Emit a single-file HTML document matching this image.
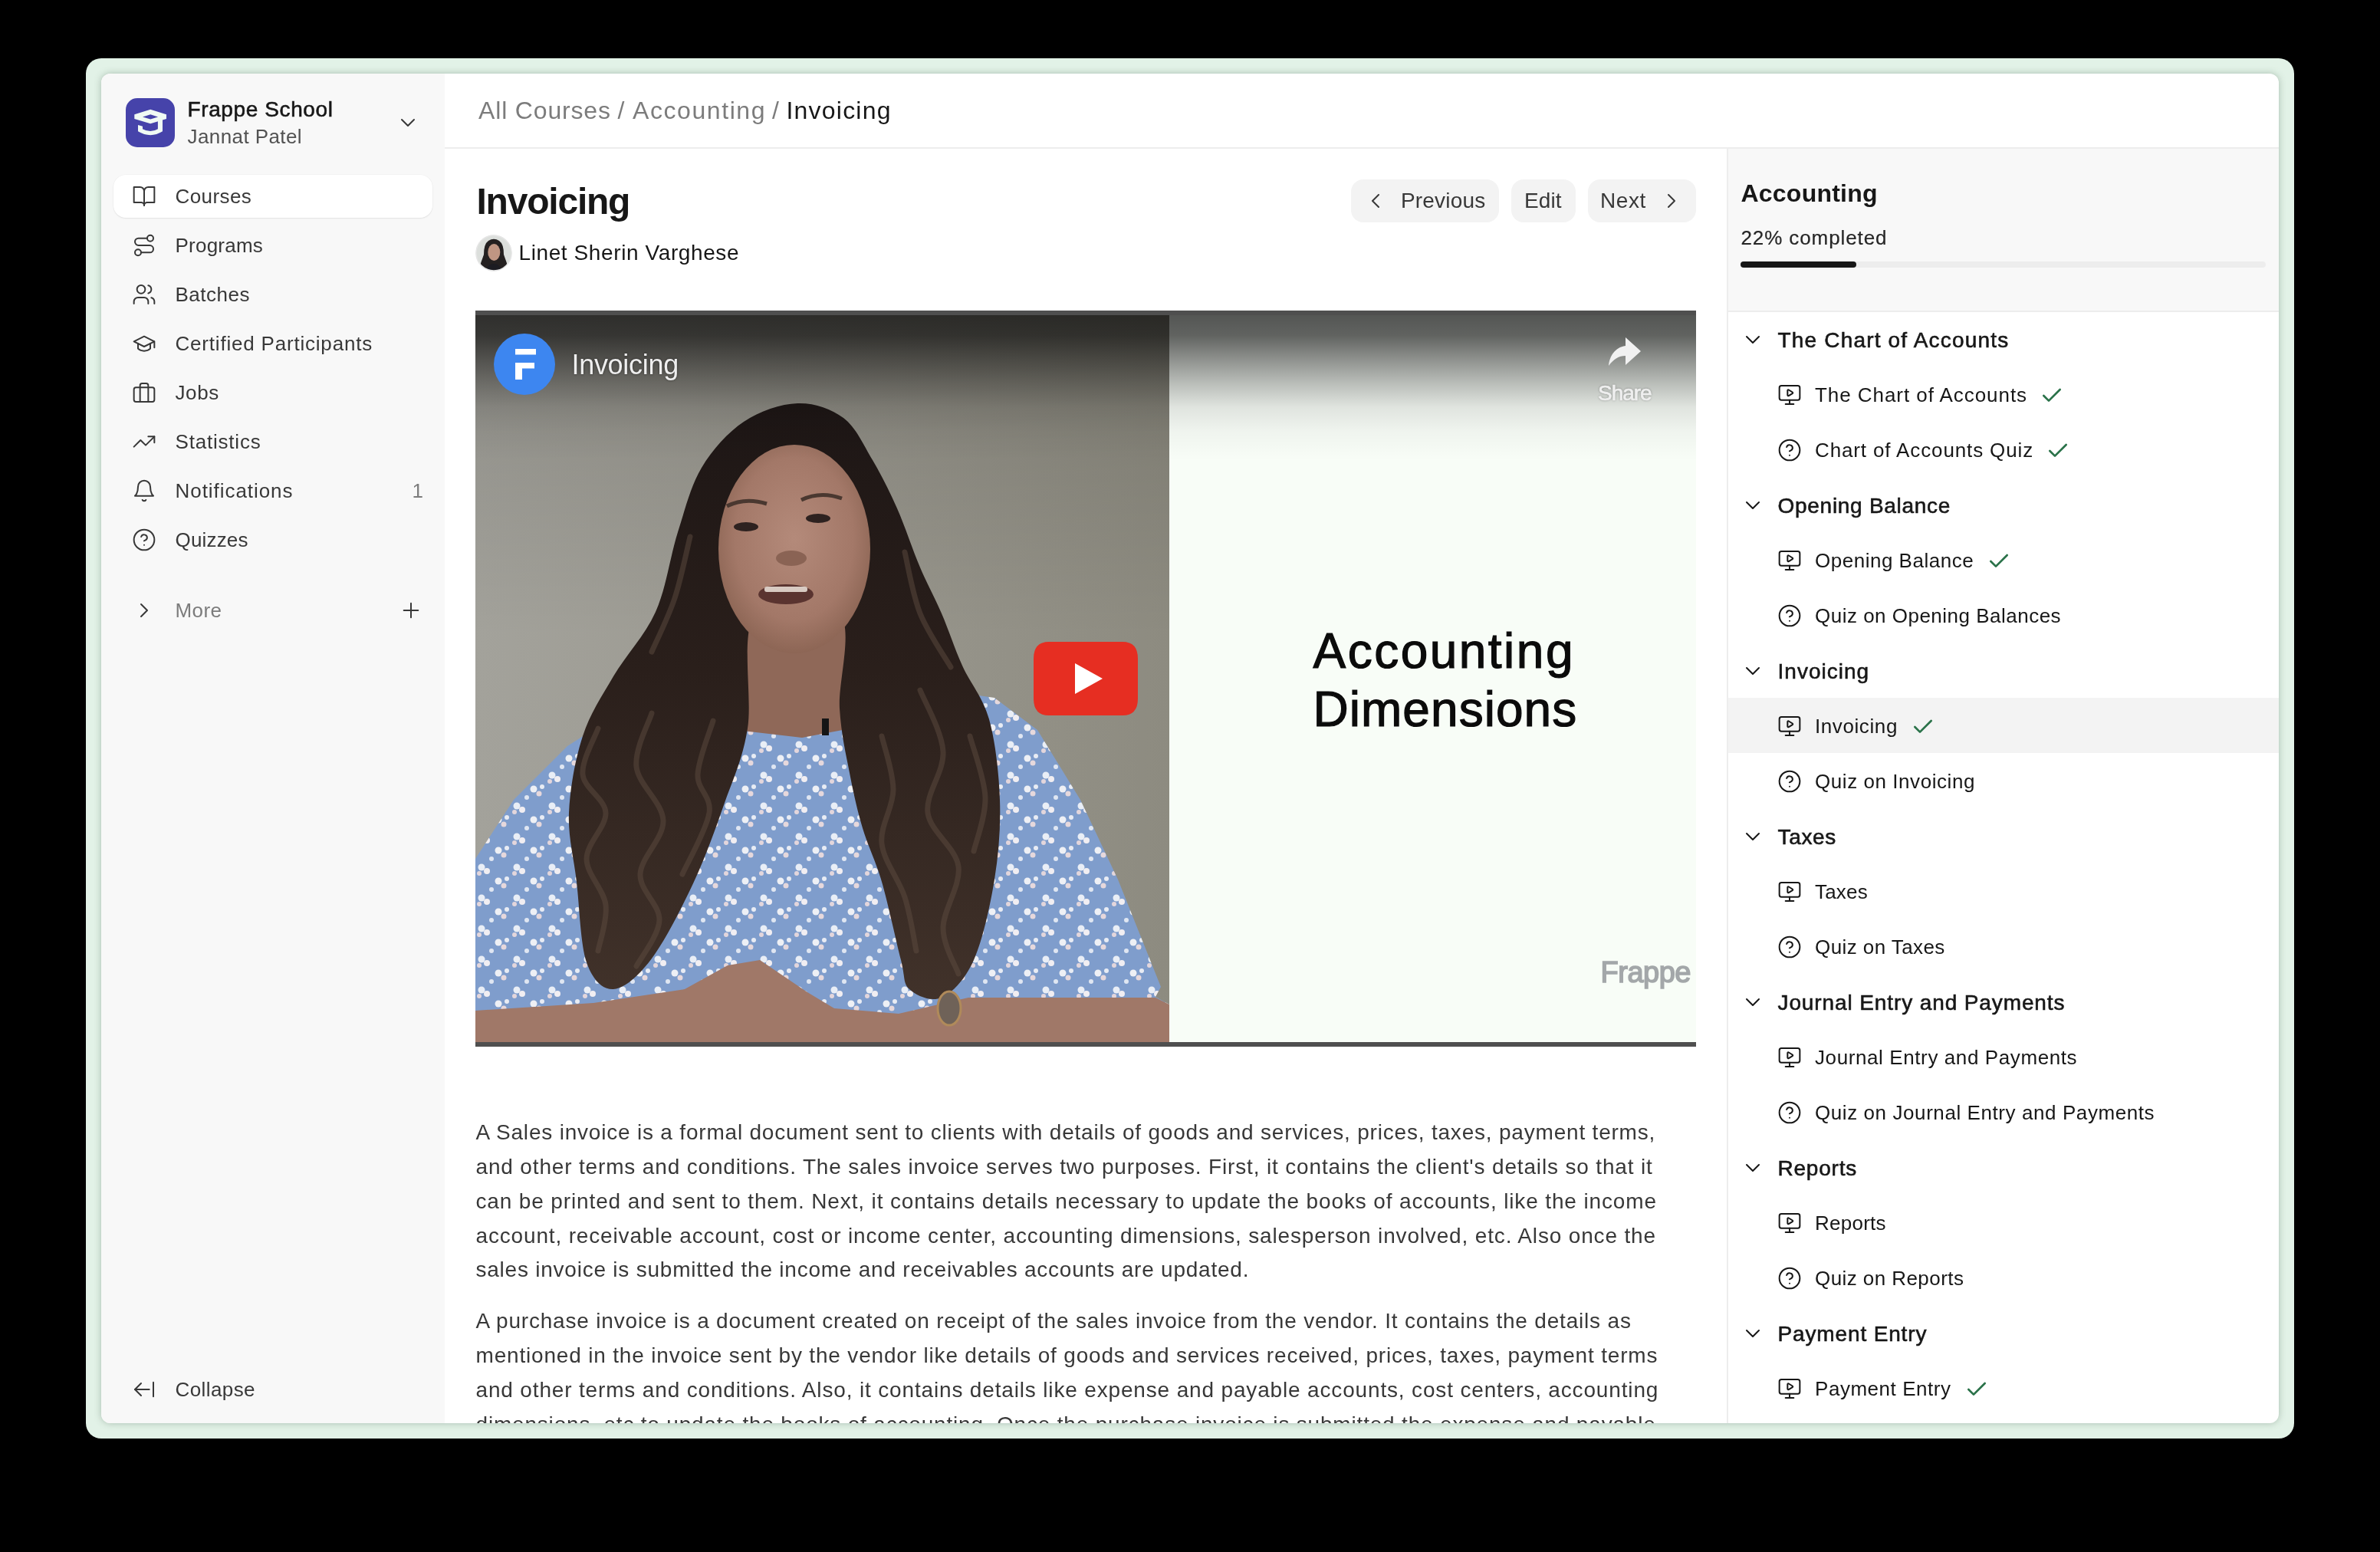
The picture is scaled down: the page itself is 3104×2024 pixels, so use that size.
<!DOCTYPE html>
<html><head><meta charset="utf-8"><title>Invoicing</title>
<style>
html,body{margin:0;padding:0;width:3104px;height:2024px;overflow:hidden;background:#000;}
body{position:relative;font-family:"Liberation Sans",sans-serif;}
.t{position:absolute;white-space:pre;}
.b{position:absolute;}
.i{position:absolute;overflow:visible;}
#frame{position:absolute;left:112px;top:76px;width:2880px;height:1800px;border-radius:20px;background:#e2f2e7;}
#win{position:absolute;left:132px;top:96px;width:2840px;height:1760px;border-radius:12px;background:#fff;box-shadow:0 0 10px rgba(60,90,70,0.35);}
#clip{position:absolute;left:132px;top:96px;width:2840px;height:1760px;overflow:hidden;border-radius:12px;}
#inner{position:absolute;left:-132px;top:-96px;width:3104px;height:2024px;will-change:transform;}
</style></head><body>
<div id="frame"></div>
<div id="win"></div>
<div id="clip"><div id="inner">
<div class="b" style="left:132px;top:96px;width:448px;height:1760px;background:#f8f8f8;"></div>
<svg class="i" style="left:160px;top:124px;width:72px;height:72px" viewBox="0 0 72 72"><rect x="4" y="4" width="64" height="64" rx="15" fill="#4643aa"/><path fill="#f0faf4" fill-rule="evenodd" d="M15.3 25.3 L36.2 18.8 L57 25.3 L57 31.1 L36.2 37.3 L15.3 31.1 Z M26 28.5 L36.2 25.3 L46.1 28.5 L36.2 31.5 Z"/><path fill="#f0faf4" d="M45.9 33 L52 31 L52 47.3 Q36.2 57 20 47.3 L20 39 L26 40.7 L26 44.2 Q36.2 50 45.9 44.2 Z"/></svg>
<div class="t" style="left:244.5px;top:129.3px;font-size:28px;line-height:28px;color:#171717;letter-spacing:0.61px;-webkit-text-stroke:0.6px #171717;">Frappe School</div>
<div class="t" style="left:244.5px;top:165.0px;font-size:26px;line-height:26px;color:#525252;letter-spacing:0.41px;">Jannat Patel</div>
<svg class="i" style="left:516px;top:144px;width:32px;height:32px;" viewBox="0 0 24 24" fill="none" stroke="#383838" stroke-width="1.5" stroke-linecap="round" stroke-linejoin="round"><path d="m6 9 6 6 6-6"/></svg>
<div class="b" style="left:148px;top:228px;width:416px;height:56px;background:#fff;border-radius:16px;box-shadow:0 1px 2px rgba(0,0,0,0.08),0 0 0 0.5px rgba(0,0,0,0.03);"></div>
<svg class="i" style="left:172px;top:240px;width:32px;height:32px;" viewBox="0 0 24 24" fill="none" stroke="#383838" stroke-width="1.5" stroke-linecap="round" stroke-linejoin="round"><path d="M2 3h6a4 4 0 0 1 4 4v14a3 3 0 0 0-3-3H2z"/><path d="M22 3h-6a4 4 0 0 0-4 4v14a3 3 0 0 1 3-3h7z"/></svg>
<div class="t" style="left:228.5px;top:243.0px;font-size:26px;line-height:26px;color:#383838;letter-spacing:0.42px;">Courses</div>
<svg class="i" style="left:172px;top:304px;width:32px;height:32px;" viewBox="0 0 24 24" fill="none" stroke="#383838" stroke-width="1.5" stroke-linecap="round" stroke-linejoin="round"><circle cx="6" cy="19" r="3"/><path d="M9 19h8.5a3.5 3.5 0 0 0 0-7h-11a3.5 3.5 0 0 1 0-7H15"/><circle cx="18" cy="5" r="3"/></svg>
<div class="t" style="left:228.5px;top:307.0px;font-size:26px;line-height:26px;color:#383838;letter-spacing:0.23px;">Programs</div>
<svg class="i" style="left:172px;top:368px;width:32px;height:32px;" viewBox="0 0 24 24" fill="none" stroke="#383838" stroke-width="1.5" stroke-linecap="round" stroke-linejoin="round"><path d="M16 21v-2a4 4 0 0 0-4-4H6a4 4 0 0 0-4 4v2"/><circle cx="9" cy="7" r="4"/><path d="M22 21v-2a4 4 0 0 0-3-3.87"/><path d="M16 3.13a4 4 0 0 1 0 7.75"/></svg>
<div class="t" style="left:228.5px;top:371.0px;font-size:26px;line-height:26px;color:#383838;letter-spacing:0.51px;">Batches</div>
<svg class="i" style="left:172px;top:432px;width:32px;height:32px;" viewBox="0 0 24 24" fill="none" stroke="#383838" stroke-width="1.5" stroke-linecap="round" stroke-linejoin="round"><path d="M22 10v6M2 10l10-5 10 5-10 5z"/><path d="M6 12v5c3 3 9 3 12 0v-5"/></svg>
<div class="t" style="left:228.5px;top:435.0px;font-size:26px;line-height:26px;color:#383838;letter-spacing:0.80px;">Certified Participants</div>
<svg class="i" style="left:172px;top:496px;width:32px;height:32px;" viewBox="0 0 24 24" fill="none" stroke="#383838" stroke-width="1.5" stroke-linecap="round" stroke-linejoin="round"><rect x="2" y="7" width="20" height="14" rx="2" ry="2"/><path d="M16 21V5a2 2 0 0 0-2-2h-4a2 2 0 0 0-2 2v16"/></svg>
<div class="t" style="left:228.5px;top:499.0px;font-size:26px;line-height:26px;color:#383838;letter-spacing:0.60px;">Jobs</div>
<svg class="i" style="left:172px;top:560px;width:32px;height:32px;" viewBox="0 0 24 24" fill="none" stroke="#383838" stroke-width="1.5" stroke-linecap="round" stroke-linejoin="round"><polyline points="22 7 13.5 15.5 8.5 10.5 2 17"/><polyline points="16 7 22 7 22 13"/></svg>
<div class="t" style="left:228.5px;top:563.0px;font-size:26px;line-height:26px;color:#383838;letter-spacing:0.80px;">Statistics</div>
<svg class="i" style="left:172px;top:624px;width:32px;height:32px;" viewBox="0 0 24 24" fill="none" stroke="#383838" stroke-width="1.5" stroke-linecap="round" stroke-linejoin="round"><path d="M6 8a6 6 0 0 1 12 0c0 7 3 9 3 9H3s3-2 3-9"/><path d="M10.3 21a1.94 1.94 0 0 0 3.4 0"/></svg>
<div class="t" style="left:228.5px;top:627.0px;font-size:26px;line-height:26px;color:#383838;letter-spacing:0.95px;">Notifications</div>
<svg class="i" style="left:172px;top:688px;width:32px;height:32px;" viewBox="0 0 24 24" fill="none" stroke="#383838" stroke-width="1.5" stroke-linecap="round" stroke-linejoin="round"><circle cx="12" cy="12" r="10"/><path d="M9.09 9a3 3 0 0 1 5.83 1c0 2-3 3-3 3"/><path d="M12 17h.01"/></svg>
<div class="t" style="left:228.5px;top:691.0px;font-size:26px;line-height:26px;color:#383838;letter-spacing:0.18px;">Quizzes</div>
<div class="t" style="left:537.5px;top:627.0px;font-size:26px;line-height:26px;color:#7c7c7c;">1</div>
<svg class="i" style="left:172px;top:780px;width:32px;height:32px;" viewBox="0 0 24 24" fill="none" stroke="#383838" stroke-width="1.5" stroke-linecap="round" stroke-linejoin="round"><path d="m9 18 6-6-6-6"/></svg>
<div class="t" style="left:228.5px;top:783.0px;font-size:26px;line-height:26px;color:#7c7c7c;letter-spacing:0.39px;">More</div>
<svg class="i" style="left:520px;top:780px;width:32px;height:32px;" viewBox="0 0 24 24" fill="none" stroke="#383838" stroke-width="1.5" stroke-linecap="round" stroke-linejoin="round"><path d="M5 12h14"/><path d="M12 5v14"/></svg>
<svg class="i" style="left:172px;top:1796px;width:32px;height:32px;" viewBox="0 0 24 24" fill="none" stroke="#383838" stroke-width="1.5" stroke-linecap="round" stroke-linejoin="round"><path d="m9 6-6 6 6 6"/><path d="M3 12h14"/><path d="M21 19V5"/></svg>
<div class="t" style="left:228.5px;top:1799.0px;font-size:26px;line-height:26px;color:#383838;letter-spacing:0.41px;">Collapse</div>
<div class="b" style="left:580px;top:192px;width:2392px;height:2px;background:#ededed;"></div>
<div class="t" style="left:624.0px;top:127.6px;font-size:32px;line-height:32px;color:#7c7c7c;letter-spacing:0.84px;">All Courses</div>
<div class="t" style="left:805.5px;top:127.6px;font-size:32px;line-height:32px;color:#7c7c7c;">/</div>
<div class="t" style="left:825.1px;top:127.6px;font-size:32px;line-height:32px;color:#7c7c7c;letter-spacing:1.56px;">Accounting</div>
<div class="t" style="left:1007.0px;top:127.6px;font-size:32px;line-height:32px;color:#7c7c7c;">/</div>
<div class="t" style="left:1025.5px;top:127.6px;font-size:32px;line-height:32px;color:#171717;letter-spacing:1.21px;">Invoicing</div>
<div class="t" style="left:621.5px;top:238.9px;font-size:48px;line-height:48px;color:#171717;letter-spacing:-1.22px;font-weight:700;">Invoicing</div>
<svg class="i" style="left:620px;top:306px;width:48px;height:48px" viewBox="0 0 48 48"><defs><clipPath id="av"><circle cx="24" cy="24" r="23"/></clipPath></defs><circle cx="24" cy="24" r="23.5" fill="#dcdfdc"/><g clip-path="url(#av)"><path d="M4 48 Q7 36 11 26 Q11 12 17 8 Q24 3.5 31 8 Q37 12 37 26 Q41 36 44 48 Z" fill="#242020"/><ellipse cx="24.3" cy="23" rx="8" ry="11" fill="#c09683"/><path d="M13 48 Q16 38 24 38 Q32 38 35 48 Z" fill="#1c1c22"/></g><circle cx="24" cy="24" r="23" fill="none" stroke="#e6e6e6" stroke-width="1.5"/></svg>
<div class="t" style="left:676.5px;top:315.8px;font-size:28px;line-height:28px;color:#171717;letter-spacing:0.60px;">Linet Sherin Varghese</div>
<div class="b" style="left:1762px;top:234px;width:193px;height:56px;background:#f3f3f3;border-radius:16px;"></div>
<div class="b" style="left:1971px;top:234px;width:84px;height:56px;background:#f3f3f3;border-radius:16px;"></div>
<div class="b" style="left:2071px;top:234px;width:141px;height:56px;background:#f3f3f3;border-radius:16px;"></div>
<svg class="i" style="left:1778px;top:246px;width:32px;height:32px;" viewBox="0 0 24 24" fill="none" stroke="#383838" stroke-width="1.5" stroke-linecap="round" stroke-linejoin="round"><path d="m15 18-6-6 6-6"/></svg>
<div class="t" style="left:1826.9px;top:248.0px;font-size:28px;line-height:28px;color:#383838;letter-spacing:0.19px;">Previous</div>
<div class="t" style="left:1988.1px;top:248.0px;font-size:28px;line-height:28px;color:#383838;letter-spacing:0.05px;">Edit</div>
<div class="t" style="left:2086.9px;top:248.0px;font-size:28px;line-height:28px;color:#383838;letter-spacing:0.61px;">Next</div>
<svg class="i" style="left:2164px;top:246px;width:32px;height:32px;" viewBox="0 0 24 24" fill="none" stroke="#383838" stroke-width="1.5" stroke-linecap="round" stroke-linejoin="round"><path d="m9 18 6-6-6-6"/></svg>
<div class="b" style="left:620px;top:405px;width:1592px;height:960px;background:#4f4f4f;overflow:hidden;">
<svg style="position:absolute;left:0;top:0;width:1592px;height:960px" viewBox="0 0 1592 960">
<defs>
<linearGradient id="wall" x1="0" y1="0" x2="1" y2="0"><stop offset="0" stop-color="#a3a29b"/><stop offset="0.5" stop-color="#9a988f"/><stop offset="1" stop-color="#8d8b80"/></linearGradient><linearGradient id="wallv" x1="0" y1="0" x2="0" y2="1"><stop offset="0" stop-color="#000" stop-opacity="0.14"/><stop offset="1" stop-color="#000" stop-opacity="0"/></linearGradient>
<linearGradient id="topfade" x1="0" y1="0" x2="0" y2="1"><stop offset="0" stop-color="#000" stop-opacity="0.66"/><stop offset="0.14" stop-color="#000" stop-opacity="0.61"/><stop offset="0.3" stop-color="#000" stop-opacity="0.43"/><stop offset="0.47" stop-color="#000" stop-opacity="0.25"/><stop offset="0.63" stop-color="#000" stop-opacity="0.10"/><stop offset="0.8" stop-color="#000" stop-opacity="0.035"/><stop offset="1" stop-color="#000" stop-opacity="0"/></linearGradient>
<radialGradient id="face" cx="0.5" cy="0.45" r="0.6"><stop offset="0" stop-color="#b48a7a"/><stop offset="0.65" stop-color="#a37868"/><stop offset="1" stop-color="#86604f"/></radialGradient>
<linearGradient id="hair" x1="0" y1="0" x2="0" y2="1"><stop offset="0" stop-color="#1d1615"/><stop offset="0.45" stop-color="#2a1f1b"/><stop offset="1" stop-color="#41322a"/></linearGradient>
<pattern id="flow" width="46" height="40" patternUnits="userSpaceOnUse">
<rect width="46" height="40" fill="#7f9dcc"/>
<circle cx="8" cy="6" r="4.5" fill="#e9eef6"/><circle cx="15" cy="11" r="4" fill="#f1eef2"/><circle cx="5" cy="14" r="3" fill="#e3d6dc"/><circle cx="30" cy="24" r="4.5" fill="#eef0f5"/><circle cx="37" cy="30" r="3.5" fill="#e6d8dc"/><circle cx="41" cy="21" r="3" fill="#e8ecf4"/><circle cx="21" cy="35" r="3" fill="#dfe6f2"/>
</pattern>
<filter id="soft" x="-2%" y="-2%" width="104%" height="104%"><feGaussianBlur stdDeviation="1.6"/></filter>
</defs>
<rect x="0" y="6" width="905" height="948" fill="url(#wall)"/><rect x="0" y="6" width="905" height="420" fill="url(#wallv)"/>
<polygon points="0,715 50,638 120,568 175,533 280,525 371,547 426,557 482,543 560,510 608,495 677,505 733,547 789,638 838,742 880,847 894,882 887,895 905,905 905,954 0,954" fill="url(#flow)"/>
<polygon points="340,395 500,395 500,543 426,557 340,547" fill="#8f6858"/>
<path d="M420.0,121.0 C441.7,120.2 463.7,127.7 480.0,140.0 C496.3,152.3 506.3,175.3 518.0,195.0 C529.7,214.7 539.7,234.7 550.0,258.0 C560.3,281.3 570.3,312.2 580.0,335.0 C589.7,357.8 598.8,373.7 608.0,395.0 C617.2,416.3 624.7,440.0 635.0,463.0 C645.3,486.0 661.8,503.8 670.0,533.0 C678.2,562.2 682.8,603.2 684.0,638.0 C685.2,672.8 682.7,707.2 677.0,742.0 C671.3,776.8 661.5,821.3 650.0,847.0 C638.5,872.7 622.0,889.7 608.0,896.0 C594.0,902.3 574.8,893.2 566.0,885.0 C557.2,876.8 561.0,870.3 555.0,847.0 C549.0,823.7 538.3,773.7 530.0,745.0 C521.7,716.3 512.0,698.7 505.0,675.0 C498.0,651.3 493.0,629.0 488.0,603.0 C483.0,577.0 477.2,553.7 475.0,519.0 C472.8,484.3 493.3,415.7 475.0,395.0 C456.7,374.3 385.0,370.0 365.0,395.0 C345.0,420.0 361.7,503.8 355.0,545.0 C348.3,586.2 336.7,608.7 325.0,642.0 C313.3,675.3 300.8,711.2 285.0,745.0 C269.2,778.8 247.5,821.7 230.0,845.0 C212.5,868.3 194.2,884.2 180.0,885.0 C165.8,885.8 153.0,873.3 145.0,850.0 C137.0,826.7 135.8,777.5 132.0,745.0 C128.2,712.5 120.7,686.7 122.0,655.0 C123.3,623.3 130.3,584.7 140.0,555.0 C149.7,525.3 164.2,504.0 180.0,477.0 C195.8,450.0 221.0,424.3 235.0,393.0 C249.0,361.7 254.0,320.3 264.0,289.0 C274.0,257.7 280.7,229.0 295.0,205.0 C309.3,181.0 329.2,159.0 350.0,145.0 C370.8,131.0 398.3,121.8 420.0,121.0 Z" fill="url(#hair)"/>
<path d="M160.0,545.0 C156.7,555.0 138.3,586.7 140.0,605.0 C141.7,623.3 169.2,636.7 170.0,655.0 C170.8,673.3 145.0,695.0 145.0,715.0 C145.0,735.0 167.5,755.0 170.0,775.0 C172.5,795.0 161.7,825.0 160.0,835.0" stroke="#5e4b40" stroke-width="7" fill="none" opacity="0.5" stroke-linecap="round"/>
<path d="M230.0,525.0 C226.7,536.7 207.5,571.7 210.0,595.0 C212.5,618.3 244.2,641.7 245.0,665.0 C245.8,688.3 215.8,713.3 215.0,735.0 C214.2,756.7 240.8,775.0 240.0,795.0 C239.2,815.0 215.0,845.0 210.0,855.0" stroke="#5e4b40" stroke-width="7" fill="none" opacity="0.5" stroke-linecap="round"/>
<path d="M310.0,535.0 C306.7,546.7 290.8,585.0 290.0,605.0 C289.2,625.0 308.3,633.3 305.0,655.0 C301.7,676.7 275.8,721.7 270.0,735.0" stroke="#5e4b40" stroke-width="7" fill="none" opacity="0.5" stroke-linecap="round"/>
<path d="M530.0,555.0 C532.5,566.7 545.0,601.7 545.0,625.0 C545.0,648.3 527.5,671.7 530.0,695.0 C532.5,718.3 552.5,741.7 560.0,765.0 C567.5,788.3 572.5,823.3 575.0,835.0" stroke="#5e4b40" stroke-width="7" fill="none" opacity="0.5" stroke-linecap="round"/>
<path d="M580.0,495.0 C585.0,508.3 608.3,548.3 610.0,575.0 C611.7,601.7 586.7,630.0 590.0,655.0 C593.3,680.0 626.7,700.0 630.0,725.0 C633.3,750.0 610.0,781.7 610.0,805.0 C610.0,828.3 626.7,855.0 630.0,865.0" stroke="#5e4b40" stroke-width="7" fill="none" opacity="0.5" stroke-linecap="round"/>
<path d="M645.0,555.0 C648.3,568.3 664.2,610.0 665.0,635.0 C665.8,660.0 652.5,693.3 650.0,705.0" stroke="#5e4b40" stroke-width="7" fill="none" opacity="0.5" stroke-linecap="round"/>
<path d="M280.0,295.0 C276.7,308.3 268.3,350.0 260.0,375.0 C251.7,400.0 235.0,433.3 230.0,445.0" stroke="#5e4b40" stroke-width="7" fill="none" opacity="0.5" stroke-linecap="round"/>
<path d="M560.0,315.0 C563.3,328.3 570.0,370.0 580.0,395.0 C590.0,420.0 613.3,453.3 620.0,465.0" stroke="#5e4b40" stroke-width="7" fill="none" opacity="0.5" stroke-linecap="round"/>
<ellipse cx="416" cy="311" rx="99" ry="136" fill="url(#face)"/>
<ellipse cx="353" cy="282" rx="16" ry="6" fill="#2e2220"/><ellipse cx="447" cy="271" rx="16" ry="6" fill="#2e2220"/>
<path d="M328,255 Q352,243 380,252" stroke="#4a3830" stroke-width="5" fill="none"/><path d="M425,247 Q450,235 478,245" stroke="#4a3830" stroke-width="5" fill="none"/>
<ellipse cx="412" cy="323" rx="20" ry="10" fill="#8a6354"/>
<ellipse cx="405" cy="370" rx="36" ry="13" fill="#5a3430"/><rect x="377" y="360" width="56" height="7" rx="3" fill="#d8cac2"/>
<rect x="452" y="532" width="9" height="22" fill="#151515"/>
<polygon points="0,913 154,903 273,885 329,854 371,847 433,889 468,910 552,917 643,896 747,896 887,896 905,905 905,954 0,954" fill="#a07868"/>
<ellipse cx="618" cy="910" rx="15" ry="22" fill="#6f6258" stroke="#b08a5a" stroke-width="3"/>
<rect x="905" y="6" width="687" height="948" fill="#f8fdf7"/>
<rect x="0" y="0" width="1592" height="6" fill="#4f4f4f"/><rect x="0" y="954" width="1592" height="6" fill="#4f4f4f"/>
<rect x="0" y="6" width="1592" height="190" fill="url(#topfade)"/>
<path d="M748,432 H844 Q864,432 864,454 V506 Q864,528 844,528 H748 Q728,528 728,506 V454 Q728,432 748,432 Z" fill="#e62e22"/>
<polygon points="782,460 818,480 782,500" fill="#fff"/>
<circle cx="64" cy="70" r="40" fill="#3d86f0"/>
<rect x="52" y="50" width="27" height="7.5" fill="#fff"/><rect x="52" y="68" width="25" height="7.5" fill="#fff"/><rect x="52" y="68" width="9" height="22" fill="#fff"/>
<path d="M1520,53 L1500,35 V46 C1486,48 1479,60 1478,72 C1485,63 1491,59 1500,59 V71 Z" fill="#f1f1f1"/>
</svg>
</div>
<div class="t" style="left:745.5px;top:457.9px;font-size:36px;line-height:36px;color:#eeeeee;letter-spacing:-0.30px;text-shadow:0 0 3px rgba(0,0,0,0.5);">Invoicing</div>
<div class="t" style="left:2084.1px;top:499.0px;font-size:28px;line-height:28px;color:#efefef;letter-spacing:-1.08px;-webkit-text-stroke:0.7px #efefef;text-shadow:0 0 3px rgba(0,0,0,0.45);">Share</div>
<div class="t" style="left:1712.5px;top:816.8px;font-size:64px;line-height:64px;color:#0b0b0b;letter-spacing:2.48px;-webkit-text-stroke:1.2px #0b0b0b;">Accounting</div>
<div class="t" style="left:1712.5px;top:892.8px;font-size:64px;line-height:64px;color:#0b0b0b;letter-spacing:1.04px;-webkit-text-stroke:1.2px #0b0b0b;">Dimensions</div>
<div class="t" style="left:2087.5px;top:1248.8px;font-size:38px;line-height:38px;color:#a3a7a9;letter-spacing:-0.49px;-webkit-text-stroke:1.6px #a3a7a9;">Frappe</div>
<div class="t" style="left:620.5px;top:1463.3px;font-size:28px;line-height:28px;color:#383838;letter-spacing:0.80px;">A Sales invoice is a formal document sent to clients with details of goods and services, prices, taxes, payment terms,</div>
<div class="t" style="left:620.5px;top:1508.1px;font-size:28px;line-height:28px;color:#383838;letter-spacing:0.84px;">and other terms and conditions. The sales invoice serves two purposes. First, it contains the client's details so that it</div>
<div class="t" style="left:620.5px;top:1552.8px;font-size:28px;line-height:28px;color:#383838;letter-spacing:0.86px;">can be printed and sent to them. Next, it contains details necessary to update the books of accounts, like the income</div>
<div class="t" style="left:620.5px;top:1597.5px;font-size:28px;line-height:28px;color:#383838;letter-spacing:0.84px;">account, receivable account, cost or income center, accounting dimensions, salesperson involved, etc. Also once the</div>
<div class="t" style="left:620.5px;top:1642.3px;font-size:28px;line-height:28px;color:#383838;letter-spacing:0.77px;">sales invoice is submitted the income and receivables accounts are updated.</div>
<div class="t" style="left:620.5px;top:1709.3px;font-size:28px;line-height:28px;color:#383838;letter-spacing:0.81px;">A purchase invoice is a document created on receipt of the sales invoice from the vendor. It contains the details as</div>
<div class="t" style="left:620.5px;top:1754.1px;font-size:28px;line-height:28px;color:#383838;letter-spacing:0.82px;">mentioned in the invoice sent by the vendor like details of goods and services received, prices, taxes, payment terms</div>
<div class="t" style="left:620.5px;top:1798.8px;font-size:28px;line-height:28px;color:#383838;letter-spacing:0.84px;">and other terms and conditions. Also, it contains details like expense and payable accounts, cost centers, accounting</div>
<div class="t" style="left:620.5px;top:1843.5px;font-size:28px;line-height:28px;color:#383838;letter-spacing:0.81px;">dimensions, etc to update the books of accounting. Once the purchase invoice is submitted the expense and payable</div>
<div class="b" style="left:2252px;top:194px;width:720px;height:212px;background:#f8f8f8;"></div>
<div class="b" style="left:2252px;top:194px;width:2px;height:1662px;background:#ededed;"></div>
<div class="b" style="left:2252px;top:405px;width:720px;height:2px;background:#ededed;"></div>
<div class="t" style="left:2270.5px;top:236.2px;font-size:32px;line-height:32px;color:#171717;letter-spacing:0.22px;font-weight:700;">Accounting</div>
<div class="t" style="left:2270.5px;top:297.0px;font-size:26px;line-height:26px;color:#262626;letter-spacing:0.90px;-webkit-text-stroke:0.2px #262626;">22% completed</div>
<div class="b" style="left:2270px;top:341px;width:685px;height:8px;background:#ededed;border-radius:4px;"></div>
<div class="b" style="left:2270px;top:341px;width:151px;height:8px;background:#171717;border-radius:4px;"></div>
<svg class="i" style="left:2270px;top:427px;width:32px;height:32px;" viewBox="0 0 24 24" fill="none" stroke="#171717" stroke-width="1.5" stroke-linecap="round" stroke-linejoin="round"><path d="m6 9 6 6 6-6"/></svg>
<div class="t" style="left:2318.5px;top:429.6px;font-size:28px;line-height:28px;color:#171717;letter-spacing:1.18px;-webkit-text-stroke:0.6px #171717;">The Chart of Accounts</div>
<svg class="i" style="left:2318px;top:499px;width:32px;height:32px;" viewBox="0 0 24 24" fill="none" stroke="#171717" stroke-width="1.5" stroke-linecap="round" stroke-linejoin="round"><rect width="20" height="14" x="2" y="3" rx="2"/><path d="M12 17v4"/><path d="M8 21h8"/><path d="M10 7.75a.75.75 0 0 1 1.142-.638l3.664 2.249a.75.75 0 0 1 0 1.278l-3.664 2.25a.75.75 0 0 1-1.142-.64z"/></svg>
<div class="t" style="left:2367.0px;top:501.7px;font-size:26px;line-height:26px;color:#171717;letter-spacing:0.94px;">The Chart of Accounts</div>
<svg class="i" style="left:2659.5px;top:499.5px;width:32px;height:32px;" viewBox="0 0 24 24" fill="none" stroke="#2a7249" stroke-width="2" stroke-linecap="round" stroke-linejoin="round"><path d="M20 6 9 17l-5-5"/></svg>
<svg class="i" style="left:2318px;top:571px;width:32px;height:32px;" viewBox="0 0 24 24" fill="none" stroke="#171717" stroke-width="1.5" stroke-linecap="round" stroke-linejoin="round"><circle cx="12" cy="12" r="10"/><path d="M9.09 9a3 3 0 0 1 5.83 1c0 2-3 3-3 3"/><path d="M12 17h.01"/></svg>
<div class="t" style="left:2367.0px;top:573.7px;font-size:26px;line-height:26px;color:#171717;letter-spacing:0.87px;">Chart of Accounts Quiz</div>
<svg class="i" style="left:2668.2px;top:571.5px;width:32px;height:32px;" viewBox="0 0 24 24" fill="none" stroke="#2a7249" stroke-width="2" stroke-linecap="round" stroke-linejoin="round"><path d="M20 6 9 17l-5-5"/></svg>
<svg class="i" style="left:2270px;top:643px;width:32px;height:32px;" viewBox="0 0 24 24" fill="none" stroke="#171717" stroke-width="1.5" stroke-linecap="round" stroke-linejoin="round"><path d="m6 9 6 6 6-6"/></svg>
<div class="t" style="left:2318.5px;top:645.6px;font-size:28px;line-height:28px;color:#171717;letter-spacing:0.72px;-webkit-text-stroke:0.6px #171717;">Opening Balance</div>
<svg class="i" style="left:2318px;top:715px;width:32px;height:32px;" viewBox="0 0 24 24" fill="none" stroke="#171717" stroke-width="1.5" stroke-linecap="round" stroke-linejoin="round"><rect width="20" height="14" x="2" y="3" rx="2"/><path d="M12 17v4"/><path d="M8 21h8"/><path d="M10 7.75a.75.75 0 0 1 1.142-.638l3.664 2.249a.75.75 0 0 1 0 1.278l-3.664 2.25a.75.75 0 0 1-1.142-.64z"/></svg>
<div class="t" style="left:2367.0px;top:717.7px;font-size:26px;line-height:26px;color:#171717;letter-spacing:0.51px;">Opening Balance</div>
<svg class="i" style="left:2590.5px;top:715.5px;width:32px;height:32px;" viewBox="0 0 24 24" fill="none" stroke="#2a7249" stroke-width="2" stroke-linecap="round" stroke-linejoin="round"><path d="M20 6 9 17l-5-5"/></svg>
<svg class="i" style="left:2318px;top:787px;width:32px;height:32px;" viewBox="0 0 24 24" fill="none" stroke="#171717" stroke-width="1.5" stroke-linecap="round" stroke-linejoin="round"><circle cx="12" cy="12" r="10"/><path d="M9.09 9a3 3 0 0 1 5.83 1c0 2-3 3-3 3"/><path d="M12 17h.01"/></svg>
<div class="t" style="left:2367.0px;top:789.7px;font-size:26px;line-height:26px;color:#171717;letter-spacing:0.49px;">Quiz on Opening Balances</div>
<svg class="i" style="left:2270px;top:859px;width:32px;height:32px;" viewBox="0 0 24 24" fill="none" stroke="#171717" stroke-width="1.5" stroke-linecap="round" stroke-linejoin="round"><path d="m6 9 6 6 6-6"/></svg>
<div class="t" style="left:2318.5px;top:861.6px;font-size:28px;line-height:28px;color:#171717;letter-spacing:1.02px;-webkit-text-stroke:0.6px #171717;">Invoicing</div>
<div class="b" style="left:2254px;top:910px;width:718px;height:72px;background:#f3f3f3;"></div>
<svg class="i" style="left:2318px;top:931px;width:32px;height:32px;" viewBox="0 0 24 24" fill="none" stroke="#171717" stroke-width="1.5" stroke-linecap="round" stroke-linejoin="round"><rect width="20" height="14" x="2" y="3" rx="2"/><path d="M12 17v4"/><path d="M8 21h8"/><path d="M10 7.75a.75.75 0 0 1 1.142-.638l3.664 2.249a.75.75 0 0 1 0 1.278l-3.664 2.25a.75.75 0 0 1-1.142-.64z"/></svg>
<div class="t" style="left:2367.0px;top:933.7px;font-size:26px;line-height:26px;color:#171717;letter-spacing:0.59px;">Invoicing</div>
<svg class="i" style="left:2491.8px;top:931.5px;width:32px;height:32px;" viewBox="0 0 24 24" fill="none" stroke="#2a7249" stroke-width="2" stroke-linecap="round" stroke-linejoin="round"><path d="M20 6 9 17l-5-5"/></svg>
<svg class="i" style="left:2318px;top:1003px;width:32px;height:32px;" viewBox="0 0 24 24" fill="none" stroke="#171717" stroke-width="1.5" stroke-linecap="round" stroke-linejoin="round"><circle cx="12" cy="12" r="10"/><path d="M9.09 9a3 3 0 0 1 5.83 1c0 2-3 3-3 3"/><path d="M12 17h.01"/></svg>
<div class="t" style="left:2367.0px;top:1005.7px;font-size:26px;line-height:26px;color:#171717;letter-spacing:0.56px;">Quiz on Invoicing</div>
<svg class="i" style="left:2270px;top:1075px;width:32px;height:32px;" viewBox="0 0 24 24" fill="none" stroke="#171717" stroke-width="1.5" stroke-linecap="round" stroke-linejoin="round"><path d="m6 9 6 6 6-6"/></svg>
<div class="t" style="left:2318.5px;top:1077.6px;font-size:28px;line-height:28px;color:#171717;letter-spacing:0.66px;-webkit-text-stroke:0.6px #171717;">Taxes</div>
<svg class="i" style="left:2318px;top:1147px;width:32px;height:32px;" viewBox="0 0 24 24" fill="none" stroke="#171717" stroke-width="1.5" stroke-linecap="round" stroke-linejoin="round"><rect width="20" height="14" x="2" y="3" rx="2"/><path d="M12 17v4"/><path d="M8 21h8"/><path d="M10 7.75a.75.75 0 0 1 1.142-.638l3.664 2.249a.75.75 0 0 1 0 1.278l-3.664 2.25a.75.75 0 0 1-1.142-.64z"/></svg>
<div class="t" style="left:2367.0px;top:1149.7px;font-size:26px;line-height:26px;color:#171717;letter-spacing:0.20px;">Taxes</div>
<svg class="i" style="left:2318px;top:1219px;width:32px;height:32px;" viewBox="0 0 24 24" fill="none" stroke="#171717" stroke-width="1.5" stroke-linecap="round" stroke-linejoin="round"><circle cx="12" cy="12" r="10"/><path d="M9.09 9a3 3 0 0 1 5.83 1c0 2-3 3-3 3"/><path d="M12 17h.01"/></svg>
<div class="t" style="left:2367.0px;top:1221.7px;font-size:26px;line-height:26px;color:#171717;letter-spacing:0.42px;">Quiz on Taxes</div>
<svg class="i" style="left:2270px;top:1291px;width:32px;height:32px;" viewBox="0 0 24 24" fill="none" stroke="#171717" stroke-width="1.5" stroke-linecap="round" stroke-linejoin="round"><path d="m6 9 6 6 6-6"/></svg>
<div class="t" style="left:2318.5px;top:1293.6px;font-size:28px;line-height:28px;color:#171717;letter-spacing:0.89px;-webkit-text-stroke:0.6px #171717;">Journal Entry and Payments</div>
<svg class="i" style="left:2318px;top:1363px;width:32px;height:32px;" viewBox="0 0 24 24" fill="none" stroke="#171717" stroke-width="1.5" stroke-linecap="round" stroke-linejoin="round"><rect width="20" height="14" x="2" y="3" rx="2"/><path d="M12 17v4"/><path d="M8 21h8"/><path d="M10 7.75a.75.75 0 0 1 1.142-.638l3.664 2.249a.75.75 0 0 1 0 1.278l-3.664 2.25a.75.75 0 0 1-1.142-.64z"/></svg>
<div class="t" style="left:2367.0px;top:1365.7px;font-size:26px;line-height:26px;color:#171717;letter-spacing:0.60px;">Journal Entry and Payments</div>
<svg class="i" style="left:2318px;top:1435px;width:32px;height:32px;" viewBox="0 0 24 24" fill="none" stroke="#171717" stroke-width="1.5" stroke-linecap="round" stroke-linejoin="round"><circle cx="12" cy="12" r="10"/><path d="M9.09 9a3 3 0 0 1 5.83 1c0 2-3 3-3 3"/><path d="M12 17h.01"/></svg>
<div class="t" style="left:2367.0px;top:1437.7px;font-size:26px;line-height:26px;color:#171717;letter-spacing:0.58px;">Quiz on Journal Entry and Payments</div>
<svg class="i" style="left:2270px;top:1507px;width:32px;height:32px;" viewBox="0 0 24 24" fill="none" stroke="#171717" stroke-width="1.5" stroke-linecap="round" stroke-linejoin="round"><path d="m6 9 6 6 6-6"/></svg>
<div class="t" style="left:2318.5px;top:1509.6px;font-size:28px;line-height:28px;color:#171717;letter-spacing:0.79px;-webkit-text-stroke:0.6px #171717;">Reports</div>
<svg class="i" style="left:2318px;top:1579px;width:32px;height:32px;" viewBox="0 0 24 24" fill="none" stroke="#171717" stroke-width="1.5" stroke-linecap="round" stroke-linejoin="round"><rect width="20" height="14" x="2" y="3" rx="2"/><path d="M12 17v4"/><path d="M8 21h8"/><path d="M10 7.75a.75.75 0 0 1 1.142-.638l3.664 2.249a.75.75 0 0 1 0 1.278l-3.664 2.25a.75.75 0 0 1-1.142-.64z"/></svg>
<div class="t" style="left:2367.0px;top:1581.7px;font-size:26px;line-height:26px;color:#171717;letter-spacing:0.25px;">Reports</div>
<svg class="i" style="left:2318px;top:1651px;width:32px;height:32px;" viewBox="0 0 24 24" fill="none" stroke="#171717" stroke-width="1.5" stroke-linecap="round" stroke-linejoin="round"><circle cx="12" cy="12" r="10"/><path d="M9.09 9a3 3 0 0 1 5.83 1c0 2-3 3-3 3"/><path d="M12 17h.01"/></svg>
<div class="t" style="left:2367.0px;top:1653.7px;font-size:26px;line-height:26px;color:#171717;letter-spacing:0.43px;">Quiz on Reports</div>
<svg class="i" style="left:2270px;top:1723px;width:32px;height:32px;" viewBox="0 0 24 24" fill="none" stroke="#171717" stroke-width="1.5" stroke-linecap="round" stroke-linejoin="round"><path d="m6 9 6 6 6-6"/></svg>
<div class="t" style="left:2318.5px;top:1725.6px;font-size:28px;line-height:28px;color:#171717;letter-spacing:0.86px;-webkit-text-stroke:0.6px #171717;">Payment Entry</div>
<svg class="i" style="left:2318px;top:1795px;width:32px;height:32px;" viewBox="0 0 24 24" fill="none" stroke="#171717" stroke-width="1.5" stroke-linecap="round" stroke-linejoin="round"><rect width="20" height="14" x="2" y="3" rx="2"/><path d="M12 17v4"/><path d="M8 21h8"/><path d="M10 7.75a.75.75 0 0 1 1.142-.638l3.664 2.249a.75.75 0 0 1 0 1.278l-3.664 2.25a.75.75 0 0 1-1.142-.64z"/></svg>
<div class="t" style="left:2367.0px;top:1797.7px;font-size:26px;line-height:26px;color:#171717;letter-spacing:0.54px;">Payment Entry</div>
<svg class="i" style="left:2561.5px;top:1795.5px;width:32px;height:32px;" viewBox="0 0 24 24" fill="none" stroke="#2a7249" stroke-width="2" stroke-linecap="round" stroke-linejoin="round"><path d="M20 6 9 17l-5-5"/></svg>
</div></div>
<script>(function(){var w=window.innerWidth;if(w&&Math.abs(w-3104)>2){document.documentElement.style.zoom=(w/3104);}})();</script>
</body></html>
